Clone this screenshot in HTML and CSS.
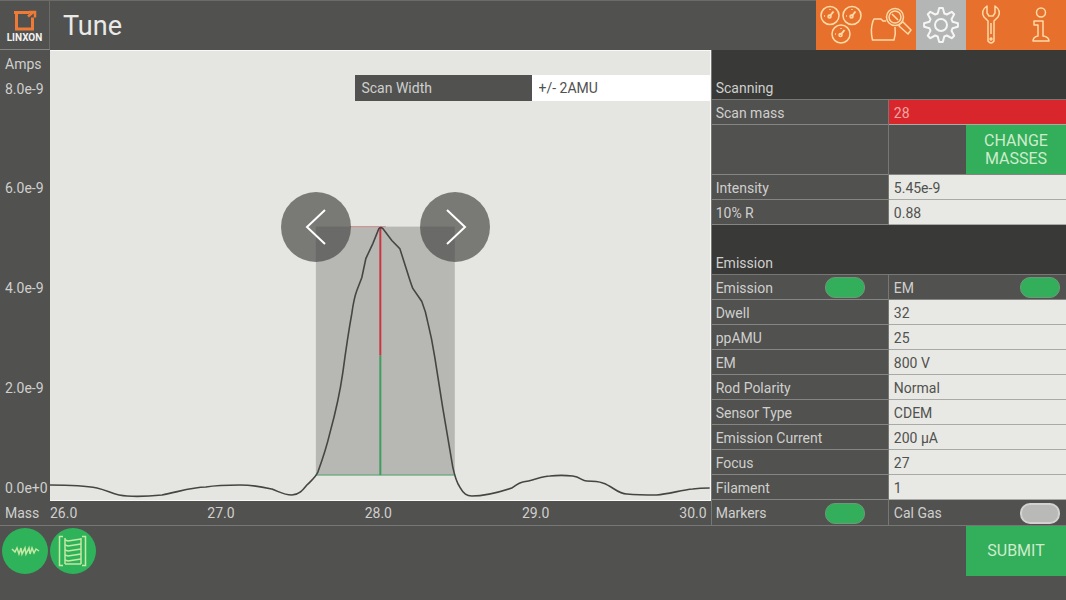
FILE: index.html
```html
<!DOCTYPE html>
<html lang="en">
<head>
<meta charset="utf-8">
<meta name="viewport" content="width=device-width, initial-scale=1">
<title>Tune</title>
<link rel="stylesheet" href="styles.css">
</head>
<body>
<header class="topbar">
  <a class="logo" href="#" aria-label="Home">
    <svg class="logo-mark" viewBox="0 0 26 24" fill="none" stroke="#ee7a35">
      <path d="M2 4H17M4.500 4V22M3 20.500H22M20.500 9V22" stroke-width="3"/>
      <path d="M16 8L22 3M17 3.500H23V9" stroke-width="2.500"/>
    </svg>
    <span class="logo-name">LINXON</span>
  </a>
  <h1 class="title">Tune</h1>
  <nav class="tabs">
    <button class="tab" type="button" aria-label="Dashboard">
      <svg viewBox="0 0 50 50"><circle cx="14" cy="15.500" r="9"/><circle cx="36" cy="15.500" r="9"/><circle cx="25" cy="34" r="9"/><path d="M13.500 16.500l4-5M35.500 16.500l4-5M24.500 35l4-5" stroke-width="2"/><path d="M8 16h1M30 16h1M19 34h1M14 9v1M36 9v1M25 28v1"/><circle cx="13.500" cy="16.500" r="1.500"/><circle cx="35.500" cy="16.500" r="1.500"/><circle cx="24.500" cy="35" r="1.500"/></svg>
    </button>
    <button class="tab" type="button" aria-label="Browse data">
      <svg viewBox="0 0 50 50"><path d="M20 21H17L15 19H8L7 21Q4 30 6.500 40H28Q30 34 29 27"/><circle cx="29" cy="17" r="8.500"/><circle cx="29" cy="17" r="6"/><path d="M26 14l6 6M34 24l3-2 8 8-3 4-9-8z"/></svg>
    </button>
    <button class="tab tab-active" type="button" aria-label="Tune settings" aria-current="page">
      <svg viewBox="0 0 50 50"><circle cx="25" cy="25" r="6"/><path d="M21.700 13.500L23.200 8.100H26.800L28.300 13.500L30.800 14.500L35.700 11.800L38.200 14.300L35.500 19.200L36.500 21.700L41.900 23.200V26.800L36.500 28.300L35.500 30.800L38.200 35.700L35.700 38.200L30.800 35.500L28.300 36.500L26.800 41.900H23.200L21.700 36.500L19.200 35.500L14.300 38.200L11.800 35.700L14.500 30.800L13.500 28.300L8.100 26.800V23.200L13.500 21.700L14.500 19.200L11.800 14.300L14.300 11.800L19.200 14.500Z"/></svg>
    </button>
    <button class="tab" type="button" aria-label="Maintenance">
      <svg viewBox="0 0 50 50"><path d="M21 6q-7 5-3 11l4 4v20q3 4 6 0V21l4-4q4-6-3-11v7l-2 3h-4l-2-3z"/><circle cx="25" cy="39" r="1"/><path d="M25 23v11"/></svg>
    </button>
    <button class="tab" type="button" aria-label="Information">
      <svg viewBox="0 0 50 50"><circle cx="25" cy="12.500" r="4.500"/><path d="M18 21h9v15q6 1 6 5H17q0-4 5-5V25h-4z"/></svg>
    </button>
  </nav>
</header>

<main class="workspace">
  <section class="graph" aria-label="Mass scan">
    <div class="y-axis">
      <span>Amps</span><span>8.0e-9</span>
      <span class="y-tick">6.0e-9</span><span class="y-tick">4.0e-9</span><span class="y-tick">2.0e-9</span><span class="y-tick">0.0e+0</span>
    </div>
    <div class="plot">
      <svg class="curve" viewBox="0 0 660 450" preserveAspectRatio="none">
        <rect x="266" y="176" width="139" height="249" fill="#b7b7b3"/>
        <path d="M266 425H405" stroke="#4da269"/>
        <path d="M330.500 305V425" stroke="#3f9d60" stroke-width="2"/>
        <path d="M330.500 177V305" stroke="#cb3540" stroke-width="2"/>
        <path d="M300 176H336" stroke="#cf8f8c"/>
        <path class="trace" d="M0 435C15 435 32 435 47 438C60 441 65 446 77 446C90 447 102 446 112 445C128 442 142 437 156 437C168 435 178 435 190 435C205 435 213 437 222 439C230 442 234 445 242 445C249 445 253 440 257 435C263 429 266 427 268 422Q276 400 280 383Q289 350 293 322Q298 285 302 263Q304 248 307 240L312 227L316 208L323 193L329 178Q331 176 333 178L342 190L350 198L357 220Q361 233 363 238L372 251Q376 261 378 272Q382 288 385 307L393 358L403 417Q406 431 410 437C414 444 417 446 422 446C433 446 447 443 462 438C467 435 468 433 473 432C483 431 492 426 500 426C508 425 515 425 523 426C531 427 532 431 537 431C545 431 548 431 553 433C563 436 568 444 577 444C588 445 598 445 607 445C619 444 632 440 643 439Q650 438 660 438"/>
      </svg>
      <div class="scan-width">
        <label for="scan-width">Scan Width</label>
        <select id="scan-width"><option>+/- 2AMU</option></select>
      </div>
      <button class="step step-left" type="button" aria-label="Lower mass"><svg viewBox="0 0 70 70"><path d="M44 18L26 35L44 52"/></svg></button>
      <button class="step step-right" type="button" aria-label="Higher mass"><svg viewBox="0 0 70 70"><path d="M27 18L45 35L27 52"/></svg></button>
    </div>
    <span class="x-name">Mass</span>
    <div class="x-axis"><span>26.0</span><span>27.0</span><span>28.0</span><span>29.0</span><span>30.0</span></div>
  </section>

  <form class="settings" id="settings">
    <h2 class="group">Scanning</h2>
    <div class="row"><label for="mass">Scan mass</label><input class="alert" id="mass" value="28"></div>
    <div class="row row-tall"><span class="cell"></span><span class="cell cell-action"><button class="action" type="button">CHANGE MASSES</button></span></div>
    <div class="row"><label for="intensity">Intensity</label><input id="intensity" value="5.45e-9"></div>
    <div class="row"><label for="res">10% R</label><input id="res" value="0.88"></div>
    <h2 class="group">Emission</h2>
    <div class="row"><label class="switch" for="emission">Emission<input id="emission" type="checkbox" checked></label><label class="switch" for="em-on">EM<input id="em-on" type="checkbox" checked></label></div>
    <div class="row"><label for="dwell">Dwell</label><input id="dwell" value="32"></div>
    <div class="row"><label for="ppamu">ppAMU</label><input id="ppamu" value="25"></div>
    <div class="row"><label for="em">EM</label><input id="em" value="800 V"></div>
    <div class="row"><label for="polarity">Rod Polarity</label><input id="polarity" value="Normal"></div>
    <div class="row"><label for="sensor">Sensor Type</label><input id="sensor" value="CDEM"></div>
    <div class="row"><label for="current">Emission Current</label><input id="current" value="200 µA"></div>
    <div class="row"><label for="focus">Focus</label><input id="focus" value="27"></div>
    <div class="row"><label for="filament">Filament</label><input id="filament" value="1"></div>
    <div class="row"><label class="switch" for="markers">Markers<input id="markers" type="checkbox" checked></label><label class="switch" for="calgas">Cal Gas<input id="calgas" type="checkbox"></label></div>
  </form>
</main>

<footer class="bottombar">
  <button class="round" type="button" aria-label="Scan view"><svg viewBox="0 0 46 46"><path d="M10 21l3 3 2-4 2 6 2-6 1 6 3-6 1 6 3-6 1 6 2-6 2 5 2-4 3 2"/></svg></button>
  <button class="round" type="button" aria-label="Table view"><svg viewBox="0 0 46 46"><path d="M13 8.500H9.500V37.500H13M32 8.500h3.500V37.500H32M15 10V36M31 10V36"/><path d="M15 12l3 1 13-2M15 17l3 1 13-2M15 22l3 1 13-2M15 27l3 1 13-2M15 32l3 1 13-2M15 36h16" stroke-width="2"/></svg></button>
  <button class="action submit" type="submit" form="settings">SUBMIT</button>
</footer>
</body>
</html>
```

FILE: styles.css
```css
* {
  box-sizing: border-box;
}

body {
  margin: 0;
  min-height: 100vh;
  display: grid;
  grid-template-rows: 50px 1fr 75px;
  background: #51514f;
  color: #cfcfcd;
  font: 14px/24px Roboto, "Liberation Sans", sans-serif;
}

button,
input,
select {
  margin: 0;
  border: 0;
  border-radius: 0;
  font: inherit;
}

button {
  padding: 0;
  cursor: pointer;
}

svg {
  display: block;
}

/* Top bar */
.topbar {
  display: flex;
  border-top: 1px solid #6b6b69;
}

.logo {
  width: 50px;
  display: flex;
  flex-direction: column;
  align-items: center;
  padding-top: 7px;
  border-right: 1px solid #6b6b69;
  border-bottom: 1px solid #858583;
  color: #f2f2f2;
  text-decoration: none;
}

.logo-mark {
  width: 26px;
  height: 25px;
}

.logo-name {
  font-size: 10px;
  font-weight: 700;
  line-height: 10px;
}

.title {
  margin: 0;
  padding-left: 13px;
  flex: 1;
  color: #e9e9e7;
  font-size: 27px;
  font-weight: 400;
  line-height: 50px;
}

.tabs {
  display: flex;
  margin-top: -1px;
}

.tab {
  width: 50px;
  height: 50px;
  background: #e7712c;
}

.tab svg {
  fill: none;
  stroke: #ffd9a6;
  stroke-width: 1.5;
  stroke-linejoin: round;
}

.tab-active {
  background: #b4b6b5;
}

.tab-active svg {
  stroke: #f5f5f3;
  stroke-width: 2;
}

/* Graph */
.workspace {
  display: grid;
  grid-template-columns: 2fr 1fr;
  border-bottom: 1px solid #777775;
}

.graph {
  display: grid;
  grid-template-columns: 50px 1fr;
  grid-template-rows: 1fr 24px;
}

.y-axis {
  display: grid;
  grid-template-rows: 25px 25px repeat(4, 1fr);
  padding: 1px 0 0 5px;
  line-height: 26px;
}

.y-tick {
  align-self: end;
}

.plot {
  position: relative;
  background: #e5e6e1;
  border: solid #f8f8f6;
  border-width: 1px 1px 1px 0;
}

.curve {
  position: absolute;
  width: 100%;
  height: 100%;
}

.curve path {
  fill: none;
  vector-effect: non-scaling-stroke;
}

.curve .trace {
  stroke: #454543;
  stroke-width: 1.6;
}

.scan-width {
  position: absolute;
  top: 24px;
  right: 0;
  width: 54%;
  height: 26px;
  display: grid;
  grid-template-columns: 1fr 1fr;
  line-height: 26px;
}

.scan-width label {
  margin-left: 2px;
  padding-left: 6px;
  background: #51514f;
}

.scan-width select {
  appearance: none;
  padding: 0 7px;
  background: #fff;
  color: #51514f;
}

.step {
  position: absolute;
  top: 39.3%;
  width: 70px;
  height: 70px;
  border-radius: 50%;
  background: rgba(70, 70, 68, 0.68);
  transform: translate(-50%, -50%);
}

.step-left {
  left: 40.3%;
}

.step-right {
  left: 61.4%;
}

.step path {
  fill: none;
  stroke: #fff;
  stroke-width: 2;
}

.x-name {
  padding-left: 5px;
}

.x-axis {
  display: flex;
  justify-content: space-between;
  padding-right: 4px;
}

/* Settings */
.settings {
  border-left: 1px solid #777775;
}

.group {
  margin: 0;
  height: 50px;
  padding: 26px 4px 0;
  border-bottom: 1px solid #777775;
  background: #393937;
  font-size: 14px;
  font-weight: 400;
}

.row {
  display: grid;
  grid-template-columns: 1fr 1fr;
  grid-template-rows: minmax(0, 1fr);
  height: 25px;
}

.row > * {
  min-width: 0;
  border-bottom: 1px solid #858583;
}

.row > :first-child {
  padding-top: 1px;
  padding-left: 4px;
  border-right: 1px solid #777775;
}

.row:last-child > * {
  border-bottom: 0;
}

.row > input {
  padding: 1px 5px 0;
  border-bottom-color: #a9a9a6;
  background: #e8e9e4;
  color: #51514f;
}

.row > .alert {
  background: #d9262d;
  color: #f0a5a0;
}

.row-tall {
  height: 50px;
}

.cell-action {
  display: flex;
  justify-content: flex-end;
}

.action {
  width: 100px;
  padding: 0 12px;
  background: #33ae5b;
  color: #cdeccb;
  font-size: 16px;
  line-height: 18px;
}

.switch {
  display: flex;
  align-items: center;
  justify-content: space-between;
  padding: 1px 6px 0 5px;
}

.switch:first-child {
  padding-right: 23px;
}

.switch input {
  appearance: none;
  width: 40px;
  height: 21px;
  border: 1px solid #6c9a78;
  border-radius: 10px;
  background: #b9b9b8;
}

.switch input:checked {
  background: #33ae5b;
}

.switch input:not(:checked) {
  border: 2px solid #d2d2d1;
}

/* Bottom bar */
.bottombar {
  display: flex;
  align-items: flex-start;
  gap: 2px;
  padding-left: 2px;
}

.round {
  width: 46px;
  height: 46px;
  margin-top: 2px;
  border-radius: 50%;
  background: #2fb35a;
}

.round path {
  fill: none;
  stroke: #c4e9a4;
  stroke-width: 1.5;
}

.submit {
  height: 50px;
  margin-left: auto;
}
```
